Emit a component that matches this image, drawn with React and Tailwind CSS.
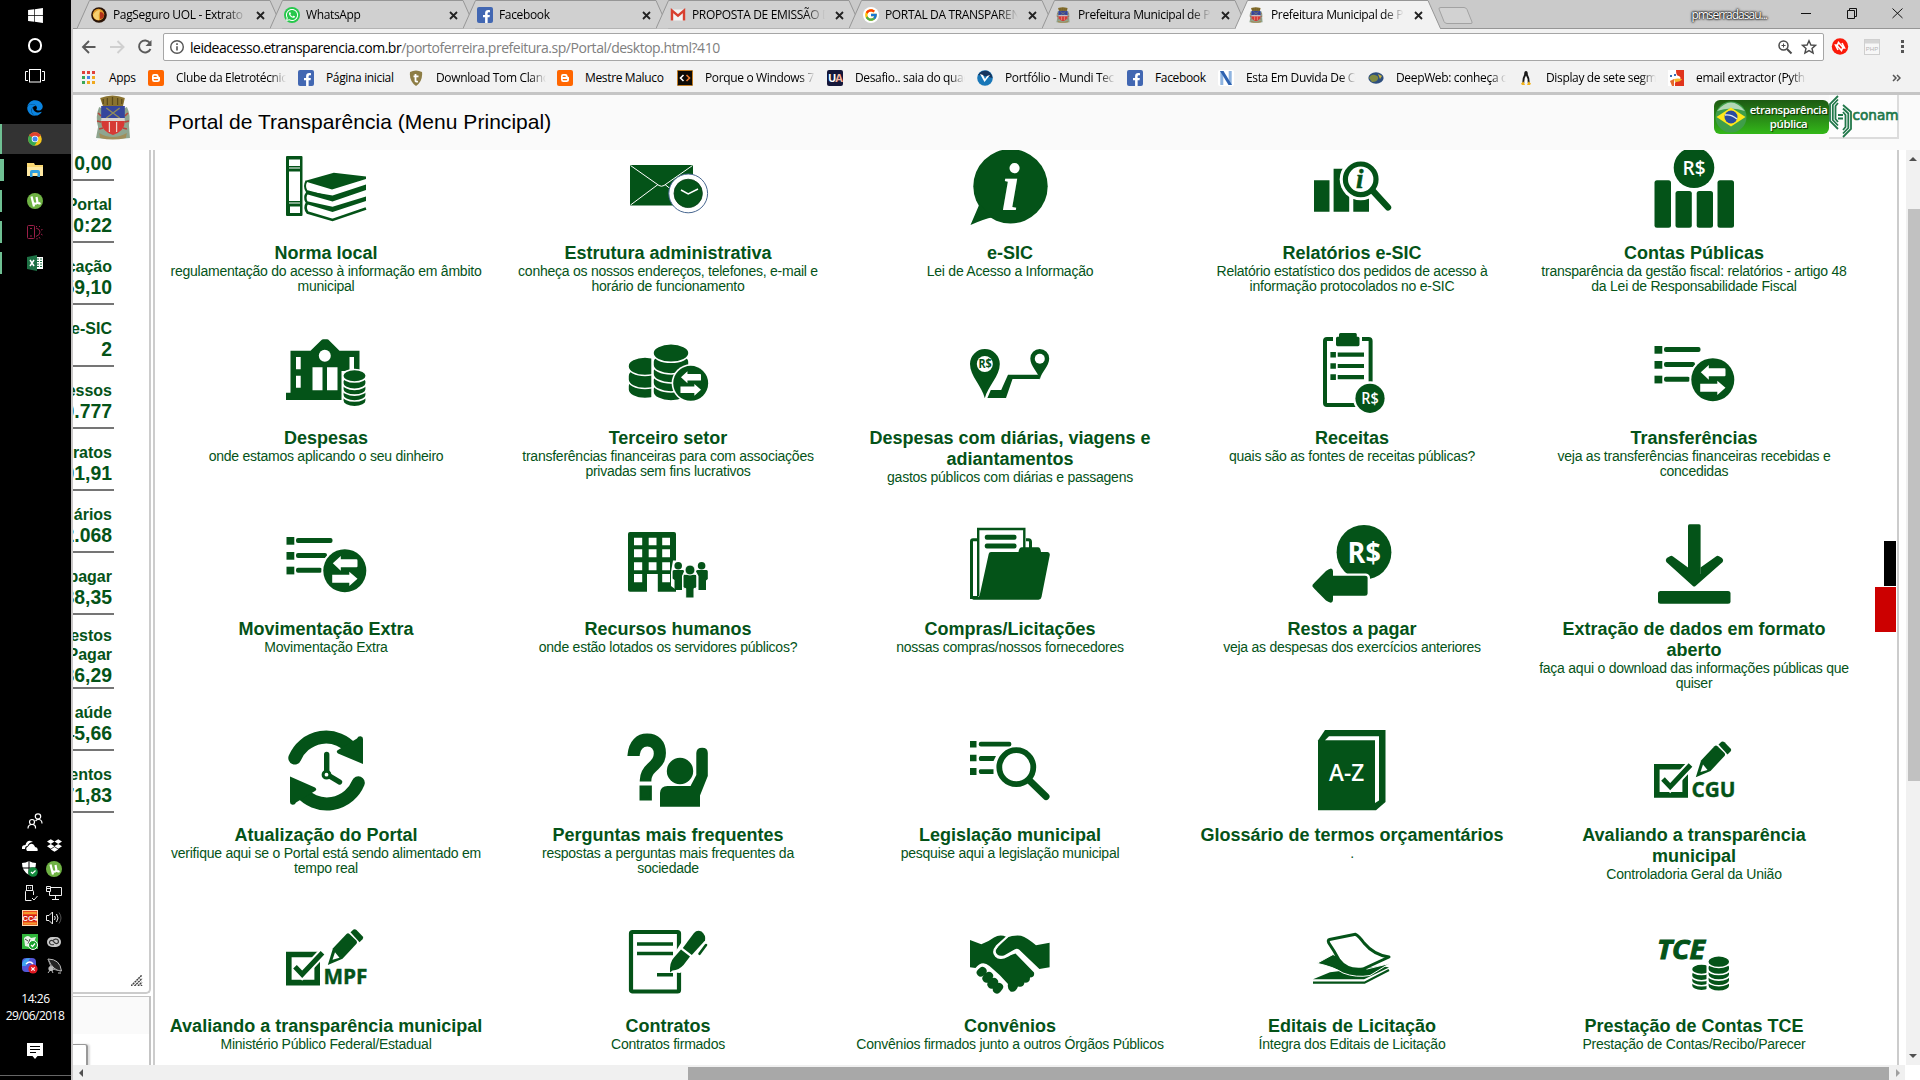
import React from "react";
import { FaWhatsapp, FaWindows, FaEdge, FaDropbox, FaFacebookF } from "react-icons/fa";
import { FcGoogle } from "react-icons/fc";

const G = "#045318";

/* ---------- shared pictogram parts ---------- */

function Coins({ x, y, w, ry, n, step }) {
  const rx = w / 2;
  const discs = [];
  for (let i = n - 1; i >= 0; i--) {
    const yy = y + ry + i * step;
    discs.push(
      <path
        key={i}
        d={`M${x} ${yy}a${rx} ${ry} 0 0 1 ${w} 0v${i === 0 ? 0.5 : step * 0.35}a${rx} ${ry} 0 0 1 ${-w} 0z`}
        fill={G}
        stroke="#fff"
        strokeWidth="1.6"
      />
    );
  }
  return <g>{discs}</g>;
}

function Swap({ cx, cy, r }) {
  const s = r / 21.3;
  return (
    <g transform={`translate(${cx} ${cy}) scale(${s})`}>
      <circle r="23.5" fill="#fff" />
      <circle r="21.5" fill={G} />
      <path d="M-12 -7.4L-4 -14.7V-11.4H11.7Q12.7 -11.4 12.7 -10V-4.5Q12.7 -3.4 11.7 -3.4H-4V0Z" fill="#fff" />
      <path d="M12.7 8L4.5 1V4H-12.6V12H4.5V15.3Z" fill="#fff" />
    </g>
  );
}

function Lines() {
  return (
    <g fill={G}>
      <rect x=".5" y="13" width="7.8" height="7.7" />
      <rect x=".5" y="28" width="7.8" height="7.7" />
      <rect x=".5" y="42.7" width="7.8" height="7.7" />
      <rect x="10" y="14" width="36.5" height="5" rx="2" />
      <rect x="10" y="29" width="31" height="5" rx="2" />
      <rect x="10" y="43.7" width="26" height="5" rx="2" />
    </g>
  );
}

function Money({ x, y, size, fill = "#fff", w = 600 }) {
  return (
    <text
      transform={`translate(${x} ${y}) scale(.93 1)`}
      fontSize={size}
      fontWeight={w}
      fill={fill}
      textAnchor="middle"
      fontFamily="'Open Sans', sans-serif"
    >
      R$
    </text>
  );
}

function CheckPencil({ label, dy, size = 21 }) {
  return (
    <g transform={`translate(0 ${dy})`}>
      <path d="M2.8 33.8H31.2V61.9H2.8Z" fill="none" stroke={G} strokeWidth="5.6" />
      <path d="M9 46L16.2 53.6L36.5 32" fill="none" stroke="#fff" strokeWidth="9" />
      <path d="M9 46L16.2 53.6L36.5 32" fill="none" stroke={G} strokeWidth="5" />
      <path d="M41.8 44.2L47 27.5L60.5 13.2Q62 12 63.5 13.2L70.5 20Q71.6 21.5 70.5 23L56.5 38Z" fill={G} />
      <path d="M46.5 39L49 31.5L53.5 37Z" fill="#fff" />
      <path d="M64.5 11.5L67.5 8.8Q69 8 70.5 9.2L77 16Q77.6 17.4 76.5 18.6L73.5 21.5Z" fill={G} />
      <text x="37.5" y="63.8" fontSize={size} fontWeight="700" fill={G} stroke={G} strokeWidth=".4" textLength="44" lengthAdjust="spacingAndGlyphs" fontFamily="'Open Sans', sans-serif">
        {label}
      </text>
    </g>
  );
}

/* ---------- menu pictograms, each on an 80 x 80 canvas ---------- */

const icons = {
  books: (
    <>
      <rect x="0" y="8" width="16.5" height="60" rx="1" fill={G} />
      <path d="M3 11.5h11v6.5H3zM3 19.5h11v1H3zM3 23.5h11V53H3zM3 54.5h11v1H3zM4 58.5h10v6.5H4z" fill="#fff" />
      <path d="M47.8 24.7L80 28.5V31L46 41.5L21 34Q18.5 33.5 19.5 32.8Z" fill={G} />
      <path d="M20.5 33Q17.6 38 20.5 43L46.5 50L79.6 39.5" fill="none" stroke={G} strokeWidth="2" />
      <path d="M80 36.5V42L46.5 53.5L20 46V43L46.5 47.5Z" fill={G} />
      <path d="M21 45Q18 49 20.5 54" fill="none" stroke={G} strokeWidth="2.4" />
      <path d="M80 48.5V53L46.5 64L20 56V53L46.5 58.8Z" fill={G} />
      <path d="M21 55Q18 60 21.5 64.5L46.5 72L80 60.5" fill="none" stroke={G} strokeWidth="2.6" />
    </>
  ),
  mail: (
    <>
      <rect x="2" y="17" width="63" height="40.5" fill={G} />
      <path d="M2.5 17.5L31 37.5Q33.5 39 36 37.5L64.5 17.5M2.5 57L30 36.5M37 36.5L50 47" fill="none" stroke="#fff" strokeWidth="1" />
      <circle cx="60.2" cy="45.4" r="19.4" fill="#fff" stroke="#47668f" strokeWidth="1" />
      <circle cx="60.2" cy="45.4" r="14.2" fill={G} stroke="#0a3d18" strokeWidth=".8" />
      <path d="M53 42L60.2 45.8L70 41" fill="none" stroke="#fff" strokeWidth="1.5" />
    </>
  ),
  info: (
    <>
      <circle cx="40.5" cy="38.3" r="37.2" fill={G} />
      <path d="M.5 77L9.5 56L23 69.3Q14 71 .5 77Z" fill={G} />
      <text x="40.5" y="62" fontSize="67" fontWeight="700" fontStyle="italic" textAnchor="middle" fill="#fff" fontFamily="'Liberation Serif', serif">
        i
      </text>
    </>
  ),
  report: (
    <>
      <path d="M2 32.3H17.5V63.7H2zM21.6 20.7H37.2V63.7H21.6zM41.3 50H57V63.7H41.3z" fill={G} />
      <circle cx="48.7" cy="31.3" r="21" fill="#fff" />
      <path d="M61 43.5L76 60" stroke="#fff" strokeWidth="10" />
      <circle cx="48.7" cy="31.3" r="15.3" fill="#fff" stroke={G} strokeWidth="5.2" />
      <path d="M60.5 42.5L76 59.3" stroke={G} strokeWidth="6.4" strokeLinecap="round" />
      <text x="47.8" y="40" fontSize="27" fontWeight="700" fontStyle="italic" textAnchor="middle" fill={G} stroke={G} strokeWidth=".5" fontFamily="'Liberation Serif', serif">
        i
      </text>
    </>
  ),
  accounts: (
    <>
      <circle cx="40" cy="19.8" r="20.3" fill={G} />
      <rect x=".5" y="32.3" width="16.5" height="47.4" rx="2.5" fill={G} />
      <rect x="21.5" y="43" width="16.3" height="36.7" rx="2.5" fill={G} />
      <rect x="42.7" y="43" width="16.3" height="36.7" rx="2.5" fill={G} />
      <rect x="63.5" y="32.3" width="16.5" height="47.4" rx="2.5" fill={G} />
      <Money x={40} y={27.2} size={20.5} />
    </>
  ),
  house: (
    <>
      <path d="M4.5 17.7H24.5L35 7.5Q36 6.3 37.5 6.3H41Q42.2 6.3 43.2 7.5L53.5 17.7H73.5V60H57V67H0V59.7H4.5Z" fill={G} />
      <circle cx="38.8" cy="22.7" r="6" fill="#fff" />
      <path d="M10 24h4.7v12.3H10zM10 42.7h4.7v12H10zM26.5 34.3h10v23h-10zM41 34.3h10.5v23H41zM63.5 24H68v13h-4.5z" fill="#fff" />
      <rect x="55.5" y="38" width="26" height="35" fill="#fff" />
      <Coins x={56.8} y={36.5} w={23.4} ry={6} n={5} step={5.8} />
    </>
  ),
  coinsSwap: (
    <>
      <Coins x={0} y={24} w={34} ry={9} n={3} step={10} />
      <rect x="23.3" y="10" width="40" height="56" fill="#fff" />
      <Coins x={25} y={10.8} w={36} ry={9} n={5} step={9} />
      <Swap cx={62.7} cy={50.3} r={17.3} />
    </>
  ),
  route: (
    <>
      <path d="M14.8 65.3C12 53 0 43 0 31A14.9 14.9 0 0 1 29.8 31C29.8 43 18 53 14.8 65.3Z" fill={G} />
      <circle cx="14.8" cy="31" r="8" fill="#fff" />
      <Money x={15} y={35.3} size={11.5} fill={G} w={700} />
      <path d="M17.4 65L20.8 57H31.2L38 41.7H68.5L69.8 46H42.5L36 65Z" fill={G} />
      <path d="M69.8 46.5C68 39 60.3 33 60.3 25.5A9.4 9.4 0 0 1 79.2 25.5C79.2 33 71.5 39 69.8 46.5Z" fill={G} />
      <circle cx="69.8" cy="25.7" r="5" fill="#fff" />
    </>
  ),
  clipboard: (
    <>
      <rect x="13" y="6" width="45.6" height="66" rx="2" fill="none" stroke={G} strokeWidth="4" />
      <rect x="21" y="1" width="29" height="13.5" fill="#fff" />
      <path d="M27 1.5Q27 0 28.5 0H43.5Q44.8 0 44.8 1.5V3.7H46Q47.5 3.7 47.5 5.2V11.5Q47.5 13.2 46 13.2H25.5Q24 13.2 24 11.5V5.2Q24 3.7 25.5 3.7H27Z" fill={G} />
      <path d="M18.4 18.9h5.5v5.6h-5.5zM18.4 30.2h5.5v5.6h-5.5zM18.4 41.3h5.5v5.6h-5.5zM25.7 19.6h26.3v4.2h-26.3zM25.7 30.9h26.3v4.2h-26.3zM25.7 42h26.3v4.2h-26.3z" fill={G} />
      <circle cx="58" cy="65.3" r="17" fill="#fff" />
      <circle cx="58" cy="65.3" r="14.6" fill={G} />
      <Money x={58} y={70.8} size={15.5} />
    </>
  ),
  listSwap: (
    <>
      <Lines />
      <Swap cx={58.8} cy={46.7} r={21.3} />
    </>
  ),
  people: (
    <>
      <path d="M2 8H46Q48 8 48 10V67.7H29.8V50H19V67.7H2Q0 67.7 0 65.7V10Q0 8 2 8Z" fill={G} />
      <path d="M6 13.7h8.2v7.6H6zM20.7 13.7h7.8v7.6h-7.8zM34.2 13.7H42v7.6h-7.8zM6 25.3h8.2v8H6zM20.7 25.3h7.8v8h-7.8zM34.2 25.3H42v8h-7.8zM6 38.3h8.2v8H6zM20.7 38.3h7.8v8h-7.8zM34.2 38.3H42v8h-7.8zM6 50h8.2v8.3H6zM34.2 50H42v8.3h-7.8z" fill="#fff" />
      <path d="M45 36.5h12v30h-8L43 62V48z" fill="#fff" />
      <circle cx="50.2" cy="41.7" r="3.8" fill={G} />
      <circle cx="73.6" cy="41.7" r="3.8" fill={G} />
      <path d="M44.6 47.5Q44.6 46 46 46H55Q56 46 56 47.5L54 52V66H46.5V56L44.6 54.5zM68 47.5Q68 46 69.5 46H78.5Q79.8 46 79.8 47.5V55L78 56.5V66H70.5V52z" fill={G} />
      <path d="M55 52Q55 50.3 56.7 50.3H67Q68.8 50.3 68.8 52V63Q68.8 64.5 66 64.5V74H57.7V64.5Q55 64.5 55 63Z" fill={G} stroke="#fff" strokeWidth="1" />
      <circle cx="62" cy="46" r="5" fill={G} stroke="#fff" strokeWidth="1" />
    </>
  ),
  folder: (
    <>
      <path d="M7 15.7H3Q1.5 15.7 1.5 17.5V73.5H8M56 15.7H58.5Q60.5 15.7 60.5 18V26" fill="none" stroke={G} strokeWidth="3" />
      <path d="M8.2 72V5H54.3V28" fill="none" stroke={G} strokeWidth="2.4" />
      <rect x="14.8" y="10.8" width="31.7" height="5" rx="2" fill={G} />
      <rect x="14.8" y="19.5" width="31.7" height="5" rx="2" fill={G} />
      <path d="M18.7 30Q19 28 21 28H48.5Q49 23.5 52 23.3H68Q70.5 23.5 71 28H77.5Q80 28.2 79.8 31L71.5 73Q71 75.7 68.5 75.7H2L9.5 72Z" fill={G} />
    </>
  ),
  payBack: (
    <>
      <circle cx="52" cy="28.3" r="27.4" fill={G} />
      <path d="M17 43.5Q22 42 22.5 49.5H54Q58 50 58 54V72Q58 74 55 74H17z" fill="#fff" />
      <path d="M.5 61Q1 60 14 47Q20.5 42 21 47V51.7H53Q55.6 51.7 55.6 54V69.5Q55.6 71.7 53 71.7H21V76Q20.5 81 14 76.5Q1 63.5 .5 62.5Z" fill={G} />
      <Money x={52.2} y={38.7} size={29} w={700} />
    </>
  ),
  download: (
    <>
      <rect x="34" y=".3" width="12.6" height="56" rx="1.5" fill={G} />
      <path d="M12.3 38Q11 36 12.8 34L16 32.3Q17.5 31.3 19 32.6L34 43.5V50H46.5V43.5L62 32.6Q63.5 31.3 65 32.3L68 34Q70 36 68.7 38L41.5 62Q40.2 63.2 38.9 62Z" fill={G} />
      <rect x="4" y="67" width="72.5" height="12.8" rx="2.5" fill={G} />
    </>
  ),
  refresh: (
    <>
      <path d="M8.8 28A34 34 0 0 1 66 19" fill="none" stroke={G} strokeWidth="13" strokeLinecap="round" />
      <path d="M71 8.5Q72 6 74.5 6.2Q77 6.5 77 9V34L52 23.5Q49.5 21.5 52 20Z" fill={G} />
      <path d="M72.3 52.8A34 34 0 0 1 15 62" fill="none" stroke={G} strokeWidth="13" strokeLinecap="round" />
      <path d="M10 72.5Q9 75 6.5 74.7Q4 74.5 4 72V46.5L29 57.5Q31.500 59.500 29 61Z" fill={G} />
      <path d="M40.7 24.5V42M43.5 46L53.5 52" stroke={G} strokeWidth="5.4" strokeLinecap="round" />
      <circle cx="40.5" cy="44.7" r="3.4" fill="#fff" stroke={G} strokeWidth="3" />
    </>
  ),
  question: (
    <>
      <text transform="translate(-2.4 69) scale(.78 1)" x="0" y="0" fontSize="91" fontWeight="700" fill={G} stroke={G} strokeWidth="3" fontFamily="'Liberation Sans', sans-serif">
        ?
      </text>
      <circle cx="52" cy="41" r="15" fill="#fff" />
      <circle cx="52" cy="41" r="13.2" fill={G} />
      <path d="M32 76.8V63Q32.5 56 39.5 56H62.5L68.3 45V23Q68.5 17.8 74.2 17.8Q79.8 17.8 79.8 23V46L72 65.5V76.8Z" fill={G} />
    </>
  ),
  search: (
    <>
      <path d="M0 11h6.5v6.5H0zM0 24.7h6.5v6.5H0zM0 38h6.5v7H0z" fill={G} />
      <rect x="8.8" y="11.8" width="32.5" height="4.8" rx="2" fill={G} />
      <path d="M10.5 26H26L23.5 31H10.5Q8.8 31 8.8 28.5T10.5 26zM10.5 39.3H23.5V44H10.5Q8.8 44 8.8 41.6T10.5 39.3z" fill={G} />
      <circle cx="46.3" cy="37.2" r="17" fill="#fff" stroke={G} strokeWidth="5.8" />
      <path d="M59.5 50.5L76 66.5" stroke={G} strokeWidth="7" strokeLinecap="round" />
    </>
  ),
  glossary: (
    <>
      <path d="M6 10.5L13 0H73.5V72L64 80.2H6Z" fill={G} />
      <path d="M13 10.3L17 6.2H67V70.5L63 73V10.3Z" fill="#fff" />
      <text x="34.6" y="51" fontSize="22.5" fontWeight="600" fill="#fff" textAnchor="middle" fontFamily="'Open Sans', sans-serif">
        A-Z
      </text>
    </>
  ),
  cgu: <CheckPencil label="CGU" dy={3} size={22} />,
  mpf: <CheckPencil label="MPF" dy={-0.3} />,
  contract: (
    <>
      <rect x="3" y="11" width="48" height="59.5" rx="1.5" fill="none" stroke={G} strokeWidth="4.2" />
      <path d="M9 23H45M9 32.5H45M29 53.7H45" stroke={G} strokeWidth="3.6" />
      <path d="M41 51L46 33L60 11H80V36L52 52Z" fill="#fff" />
      <path d="M42 51.5Q41.5 41 46 36.5L53 28.5L62 35.5L55.5 44Q51 49 44.5 49.5Z" fill={G} />
      <path d="M54.8 27L66 12Q69 8.5 73.5 10.5Q78 14 77 19.5L63.8 34Z" fill={G} />
      <path d="M78 24L71.5 32.8" stroke={G} strokeWidth="2.6" strokeLinecap="round" />
    </>
  ),
  hands: (
    <>
      <path d="M0 19L11.3 23.3Q18 21 24 16.5Q30 13 36.5 16L27 26Q22.5 32 26 35.5Q31 39.5 38 35L45.5 32.5L64 51.5Q65 56 60 56.5Q60 62.5 54.5 61.5Q53.5 67 48 65.5Q45.5 72 40.5 70.5Q37 68 38 63Q30 53.5 19.5 45Q12 38.5 5.5 47L0 46.3Z" fill={G} />
      <path d="M25.5 30Q26 27 37 16.5Q43 14 51 14.7Q57 16.5 66 24.3L79.6 21.7V46.3L69.4 48L49 28.5Q47 27 44.5 28.5L34 34.5Q26.5 36 25.5 30Z" fill={G} />
      <g stroke={G} strokeWidth="8.2" strokeLinecap="round">
        <path d="M10.8 51.5L12.5 50M16.5 57.5L19 55M21.5 63.5L24 61M27 68.5L29 66" />
      </g>
      <path d="M37.5 15.5L27 25Q22 31 26 35Q30 39 38 34.5Q46 29 48.5 30.5L67 48.5" fill="none" stroke="#fff" strokeWidth="2.2" />
    </>
  ),
  papers: (
    <>
      <path d="M18 51.3L1 58.3H52L77 46.5L70 45Z" fill={G} />
      <path d="M1 61.7H52.5L77 49" fill="none" stroke={G} strokeWidth="2.2" />
      <path d="M21 33.5L5 42.3Q22 46 31 52Q44 57 58 54.5L77.5 42.5L55 48Z" fill={G} stroke="#fff" strokeWidth="1" />
      <path d="M17.5 18.5Q15.5 19 16.8 22Q23 31 27 39Q35 50 51 48L77 36Q62 34 52 22Q47 15 43.5 13.3Z" fill="#fff" stroke={G} strokeWidth="3" strokeLinejoin="round" />
    </>
  ),
  tce: (
    <>
      <text x="3" y="38" fontSize="27" fontWeight="700" fontStyle="italic" fill={G} stroke={G} strokeWidth="1" textLength="48" lengthAdjust="spacingAndGlyphs" fontFamily="'Open Sans', sans-serif">
        TCE
      </text>
      <Coins x={37.5} y={43} w={20} ry={5} n={4} step={5} />
      <rect x="52.5" y="36" width="25" height="33" fill="#fff" />
      <Coins x={53.8} y={34.8} w={22} ry={5.6} n={5} step={5.6} />
    </>
  ),
};

const rows = [
  [
    ["books", "Norma local", "regulamentação do acesso à informação em âmbito\nmunicipal"],
    ["mail", "Estrutura administrativa", "conheça os nossos endereços, telefones, e-mail e\nhorário de funcionamento"],
    ["info", "e-SIC", "Lei de Acesso a Informação"],
    ["report", "Relatórios e-SIC", "Relatório estatístico dos pedidos de acesso à\ninformação protocolados no e-SIC"],
    ["accounts", "Contas Públicas", "transparência da gestão fiscal: relatórios - artigo 48\nda Lei de Responsabilidade Fiscal"],
  ],
  [
    ["house", "Despesas", "onde estamos aplicando o seu dinheiro"],
    ["coinsSwap", "Terceiro setor", "transferências financeiras para com associações\nprivadas sem fins lucrativos"],
    ["route", "Despesas com diárias, viagens e\nadiantamentos", "gastos públicos com diárias e passagens"],
    ["clipboard", "Receitas", "quais são as fontes de receitas públicas?"],
    ["listSwap", "Transferências", "veja as transferências financeiras recebidas e\nconcedidas"],
  ],
  [
    ["listSwap", "Movimentação Extra", "Movimentação Extra"],
    ["people", "Recursos humanos", "onde estão lotados os servidores públicos?"],
    ["folder", "Compras/Licitações", "nossas compras/nossos fornecedores"],
    ["payBack", "Restos a pagar", "veja as despesas dos exercícios anteriores"],
    ["download", "Extração de dados em formato\naberto", "faça aqui o download das informações públicas que\nquiser"],
  ],
  [
    ["refresh", "Atualização do Portal", "verifique aqui se o Portal está sendo alimentado em\ntempo real"],
    ["question", "Perguntas mais frequentes", "respostas a perguntas mais frequentes da\nsociedade"],
    ["search", "Legislação municipal", "pesquise aqui a legislação municipal"],
    ["glossary", "Glossário de termos orçamentários", "."],
    ["cgu", "Avaliando a transparência\nmunicipal", "Controladoria Geral da União"],
  ],
  [
    ["mpf", "Avaliando a transparência municipal", "Ministério Público Federal/Estadual"],
    ["contract", "Contratos", "Contratos firmados"],
    ["hands", "Convênios", "Convênios firmados junto a outros Órgãos Públicos"],
    ["papers", "Editais de Licitação", "Íntegra dos Editais de Licitação"],
    ["tce", "Prestação de Contas TCE", "Prestação de Contas/Recibo/Parecer"],
  ],
];

function Card({ icon, title, text }) {
  return (
    <div className="flex flex-col items-center whitespace-pre text-center text-[#045318]">
      <svg width="80" height="80" viewBox="0 0 80 80" className="block shrink-0 overflow-visible">
        {icons[icon]}
      </svg>
      <h2 className="mt-[15px] text-[18px] font-bold leading-[21px]">{title}</h2>
      <p className="text-[14px] leading-[15px] tracking-[-0.24px]">{text}</p>
    </div>
  );
}

/* ---------- small logos ---------- */

function Crest({ w, h }) {
  return (
    <svg width={w} height={h} viewBox="0 0 35 45" preserveAspectRatio="none" className="block">
      <path d="M4 12Q0 22 3 32L1 43L12 44H23L34 43L33 30Q35 20 31 12L27 14V30H8V14Z" fill="#8fa58f" />
      <path d="M3 18l3 3M2 26l4 1M4 34l4-1M32 18l-3 3M33 26l-4 1M31 34l-4-1" stroke="#b5443a" strokeWidth="1.6" />
      <path d="M5 3Q17 -2 29 3L27 12H8Z" fill="#8a7330" />
      <path d="M8 4v5M12 3v7M17 2v8M22 3v7M26 4v5" stroke="#5b4a1c" strokeWidth="1.2" />
      <path d="M6 11H29V25H6Z" fill="#35459c" />
      <path d="M11 13l13 10M24 13L11 23" stroke="#8f8a5c" strokeWidth="1.4" />
      <path d="M6 23H29V26H6Z" fill="#d8d4cf" />
      <path d="M6 26H29Q29 36 17.5 40Q6 36 6 26Z" fill="#d63a35" />
      <path d="M14 27v10M21 27v10" stroke="#f0d0cc" strokeWidth="1.2" />
      <path d="M4 38Q17 46 31 38L30 43Q17 46 5 43Z" fill="#a08e5a" />
    </svg>
  );
}

const Box = ({ bg, children, round }) => (
  <span className={"flex h-4 w-4 shrink-0 items-center justify-center overflow-hidden " + (round ? "rounded-full" : "rounded-[2px]")} style={{ background: bg }}>
    {children}
  </span>
);

const Fb = () => (
  <Box bg="#4267b2">
    <FaFacebookF className="ml-[3px] mt-[3px] text-[13px] text-white" />
  </Box>
);
const Blog = () => (
  <Box bg="#ff6600">
    <svg width="10" height="10" viewBox="0 0 10 10">
      <path d="M3 1H5.5Q7.6 1 7.6 3.3Q7.8 4 9 4.2V6.5Q9 9 6.5 9H3.3Q1 9 1 6.5V3.2Q1 1 3 1Z" fill="#fff" />
      <path d="M3.2 3.4H5.2M3.2 6.6H6.6" stroke="#ff6600" strokeWidth="1.2" strokeLinecap="round" />
    </svg>
  </Box>
);

const favs = {
  pag: (
    <svg width="16" height="16" viewBox="0 0 16 16">
      <circle cx="8" cy="8" r="7.8" fill="#2a1408" />
      <circle cx="7.5" cy="7.6" r="5.8" fill="#e09a2a" />
      <path d="M2 8Q5 3 9 3Q7 8 8 13Q3 13 2 8Z" fill="#f6d070" />
      <path d="M9 5Q13 5 13 9Q12 12 9 12Z" fill="#b3331a" />
    </svg>
  ),
  wa: (
    <Box bg="#27c84c" round>
      <FaWhatsapp className="text-[14px] text-white" />
    </Box>
  ),
  fb: <Fb />,
  gmail: (
    <svg width="16" height="16" viewBox="0 0 16 16">
      <rect x="1" y="2.5" width="14" height="11" fill="#f2f2f2" />
      <path d="M2 13.5V3.6L8 8.6L14 3.6V13.5" fill="none" stroke="#d8402f" strokeWidth="2.4" />
    </svg>
  ),
  google: (
    <Box bg="#fff" round>
      <FcGoogle className="text-[14px]" />
    </Box>
  ),
  crest: <Crest w={14} h={16} />,
};

const tabs = [
  ["pag", "PagSeguro UOL - Extrato de"],
  ["wa", "WhatsApp"],
  ["fb", "Facebook"],
  ["gmail", "PROPOSTA DE EMISSÃO DE"],
  ["google", "PORTAL DA TRANSPARENCIA"],
  ["crest", "Prefeitura Municipal de Porto"],
  ["crest", "Prefeitura Municipal de Porto"],
];

function Tab({ icon, label, active }) {
  return (
    <div className="relative mr-[-13px] h-[29px] w-[206px] shrink-0">
      <svg width="206" height="29" className="absolute inset-0">
        <path d="M0 28.5L12.5 .5H193L205.5 28.5" fill={active ? "#f2f2f2" : "#d0d0d0"} stroke="#969696" />
        {active && <path d="M1 28.5H205" stroke="#f2f2f2" />}
      </svg>
      <div className="relative flex h-[29px] items-center pl-[14px]">
        {favs[icon]}
        <span
          className={
            "w-[133px] overflow-hidden whitespace-nowrap text-[12px] tracking-[-0.35px] text-black [mask-image:linear-gradient(to_right,black_85%,transparent)] " +
            (icon === "crest" ? "ml-[8px]" : "ml-[6px]")
          }
        >
          {label}
        </span>
        <svg width="9" height="9" viewBox="0 0 9 9" className="absolute left-[178.5px] top-[11px]">
          <path d="M1 1L8 8M8 1L1 8" stroke="#222" strokeWidth="1.8" />
        </svg>
      </div>
    </div>
  );
}

const bookmarks = [
  [150, <Blog />, "Clube da Eletrotécnica"],
  [110, <Fb />, "Página inicial"],
  [149, (
    <svg width="16" height="16" viewBox="0 0 16 16">
      <path d="M2 2Q8 -1 14 2Q15 11 8 16Q1 11 2 2Z" fill="#8d7d45" />
      <path d="M7.5 4V11Q8 12 10 11.5M5.5 6.3H10.5" fill="none" stroke="#fff" strokeWidth="1.8" />
    </svg>
  ), "Download Tom Clancy"],
  [120, <Blog />, "Mestre Maluco"],
  [150, (
    <Box bg="#0d0a06">
      <svg width="16" height="16" viewBox="0 0 16 16"><rect x=".5" y=".5" width="15" height="15" fill="none" stroke="#c67f22" /><path d="M6.5 5L3.5 8L6.5 11" fill="none" stroke="#fff" strokeWidth="1.6" /><path d="M9.5 5L12.5 8L9.5 11" fill="none" stroke="#e8772e" strokeWidth="1.6" /></svg>
    </Box>
  ), "Porque o Windows 7"],
  [150, (
    <Box bg="#15173a">
      <span className="text-[11px] font-bold leading-none tracking-[-1px] text-white">U<span className="text-[#f3b3a0]">A</span></span>
    </Box>
  ), "Desafio.. saia do quadrado"],
  [150, (
    <svg width="16" height="16" viewBox="0 0 16 16"><circle cx="8" cy="8" r="7.8" fill="#1877b8" /><path d="M1 5Q4 0 10 .8Q15 3 15.5 8L8 6Z" fill="#17365e" /><path d="M3 4L7.5 12L13 5L10 6L8 9L6 5Z" fill="#fff" /></svg>
  ), "Portfólio - Mundi Tecno"],
  [91, <Fb />, "Facebook"],
  [150, (
    <Box bg="#fff">
      <svg width="12" height="14" viewBox="0 0 12 14"><path d="M1.8 14V0M10.2 0V14" stroke="#8fb4e0" strokeWidth="3" /><path d="M0 0H3.5L12 14H8.5Z" fill="#2e62b0" /></svg>
    </Box>
  ), "Esta Em Duvida De Como"],
  [150, (
    <svg width="16" height="16" viewBox="0 0 16 16"><ellipse cx="8" cy="8" rx="7.6" ry="5.8" fill="#2e4f7e" /><path d="M1 8Q3 4 7 5T10 9T4 12Z" fill="#7f8a42" /><path d="M10 4L14 6L12 9Z" fill="#c9b13f" /></svg>
  ), "DeepWeb: conheça o"],
  [150, (
    <svg width="16" height="16" viewBox="0 0 16 16"><path d="M8 1Q10 1 9.8 4.500Q12 8.500 11.500 13H4.500Q4 8.500 6.200 4.500Q6 1 8 1Z" fill="#1a1a1a" /><path d="M8 5.500Q10 8 9.700 13H6.300Q6 8 8 5.500Z" fill="#fff" /><path d="M3 13.500L5.500 11.500L7 15H4ZM13 13.500L10.500 11.500L9 15H12Z" fill="#f2b31b" /></svg>
  ), "Display de sete segmentos"],
  [150, (
    <svg width="16" height="16" viewBox="0 0 16 16"><rect width="16" height="16" fill="#fff" /><path d="M8 0H16V16H7Q6 11 11 10Q14 8 11 6Q8 6 8 0Z" fill="#e0341c" /><path d="M6 9Q10 8 14 9Q13 12 7 12Z" fill="#f5b72c" /><path d="M2 5h2v2H2zM6 4h2v2H6z" fill="#3a6fb5" /><path d="M2 11L6 9L6 16H4Z" fill="#e66a2b" /></svg>
  ), "email extractor (Python"],
];

function BrowserChrome() {
  return (
    <header className="h-[95px] shrink-0 border-b-[3px] border-[#c5c5c5] bg-[#f2f2f2] font-['Open_Sans',sans-serif]">
      <div className="flex h-[29px] border-b border-[#969696] bg-[#cacaca] pl-[4px]">
        {tabs.map(([icon, label], i) => (
          <Tab key={i} icon={icon} label={label} active={i === 6} />
        ))}
        <svg width="38" height="18" viewBox="0 0 38 18" className="ml-[10px] mt-[7px] shrink-0">
          <path d="M3 .5H26Q28 .5 29 2.5L34 15Q34.5 16.5 33 16.5H9Q7 16.5 6 14.5L1 2Q.5 .5 3 .5Z" fill="#d2d2d2" stroke="#a2a2a2" />
        </svg>
        <div className="ml-auto flex items-start">
          <span className="mr-[34px] mt-[6px] text-[12px] leading-[17px] tracking-[-1px] text-white [text-shadow:0_0_2px_#000,0_0_2px_#000,0_0_3px_#222]">pmserradasau...</span>
          <svg width="102" height="12" viewBox="0 0 102 12" className="mr-[17px] mt-[7px]" fill="none" stroke="#111">
            <path d="M0 6.5H10M46.5 3.5H53.5V11.5H46.5ZM48.5 3V1.5H55.5V9.5H54M91.5 1.5L101.5 11M101.5 1.5L91.5 11" />
          </svg>
        </div>
      </div>
      <div className="flex h-[36px] items-center">
        <svg width="75" height="20" viewBox="0 0 75 20" className="ml-[7px] shrink-0" fill="none" strokeWidth="1.9">
          <path d="M15.5 10H3M9 4L3 10L9 16" stroke="#5a5a5a" />
          <path d="M30 10H43M37.5 4L43.5 10L37.5 16" stroke="#d0d0d0" />
          <path d="M70 6A6 6 0 1 0 70.500 12" stroke="#5a5a5a" />
          <path d="M71.500 3V9H65.500Z" fill="#5a5a5a" />
        </svg>
        <div className="ml-[8px] flex h-[28px] w-[1661px] items-center rounded-[2px] border border-[#a6a6a6] bg-white">
          <svg width="16" height="16" viewBox="0 0 16 16" className="ml-[5px] shrink-0">
            <circle cx="8" cy="8" r="6.3" fill="none" stroke="#555" strokeWidth="1.4" />
            <path d="M8 7.2V11.5M8 4.3V6" stroke="#555" strokeWidth="1.6" />
          </svg>
          <span className="ml-[5px] whitespace-nowrap text-[14px] tracking-[-0.48px] text-[#808080]">
            <span className="text-black">leideacesso.etransparencia.com.br</span>/portoferreira.prefeitura.sp/Portal/desktop.html?410
          </span>
          <svg width="40" height="16" viewBox="0 0 40 16" className="ml-auto mr-[6px]" fill="none" stroke="#4a4a4a">
            <circle cx="6.5" cy="6.5" r="4.5" strokeWidth="1.5" />
            <path d="M10 10L14.5 14.5" strokeWidth="2" />
            <path d="M4.5 6.5H8.5M6.5 4.5V8.5" />
            <path d="M32 1.8L33.9 6L38.5 6.4L35 9.4L36.1 14L32 11.600L27.9 14L29 9.4L25.5 6.4L30.1 6Z" strokeWidth="1.4" />
          </svg>
        </div>
        <svg width="80" height="20" viewBox="0 0 80 20" className="ml-[6px]">
          <circle cx="10" cy="9.5" r="8.2" fill="#fa1a0a" />
          <path d="M8 13L5.5 8H7.5L8.5 5.5L13.5 11M12 6L14.5 11H12.5L11.5 13.5L6.5 8" fill="none" stroke="#fff" strokeWidth="1.6" />
          <rect x="34.5" y="2.5" width="15" height="15" fill="#f7f7f7" stroke="#cfcfcf" />
          <rect x="35" y="3" width="14" height="3.5" fill="#d5d5d5" />
          <text x="42" y="14" fontSize="6" fill="#b5b5b5" textAnchor="middle" fontFamily="Liberation Sans, sans-serif">PHP</text>
          <path d="M71 3h3v3h-3zM71 8h3v3h-3zM71 13h3v3h-3z" fill="#555" />
        </svg>
      </div>
      <div className="flex h-[25px] items-center whitespace-nowrap text-[12px] tracking-[-0.35px] text-black">
        <svg width="13" height="13" viewBox="0 0 13 13" className="ml-[9px] shrink-0">
          <path d="M0 0h3v3H0zM5 0h3v3H5zM10 0h3v3h-3z" fill="#e0403a" />
          <path d="M0 5h3v3H0z" fill="#3aa757" /><path d="M5 5h3v3H5z" fill="#4382e8" /><path d="M10 5h3v3h-3z" fill="#f0a91e" />
          <path d="M0 10h3v3H0z" fill="#3aa757" /><path d="M5 10h3v3H5zM10 10h3v3h-3z" fill="#f0a91e" />
        </svg>
        <span className="ml-[14px] w-[39px]">Apps</span>
        {bookmarks.map(([w, icon, label], i) => (
          <div key={i} className="flex shrink-0 items-center" style={{ width: w }}>
            {icon}
            <span
              className={
                "ml-[12px] w-[110px] overflow-hidden " +
                (label.length > 15 ? "[mask-image:linear-gradient(to_right,black_86%,transparent)]" : "")
              }
            >
              {label}
            </span>
          </div>
        ))}
        <svg width="9" height="8" viewBox="0 0 9 8" className="ml-auto mr-[19px]" fill="none" stroke="#555" strokeWidth="1.5">
          <path d="M1 1L4 4L1 7M5 1L8 4L5 7" />
        </svg>
      </div>
    </header>
  );
}

/* ---------- Windows task bar ---------- */

const UT = ({ s = 16 }) => (
  <svg width={s} height={s} viewBox="0 0 16 16">
    <circle cx="8" cy="8" r="8" fill="#6fb244" />
    <path d="M4.5 3.5L6 9.5Q8 12 10.5 9.5L9.5 4M10.5 9.5Q11.5 11 13.5 10M6 9.5L7 13.5" fill="none" stroke="#fff" strokeWidth="2.2" />
  </svg>
);

const Chrome = () => (
  <svg width="14" height="14" viewBox="0 0 14 14">
    <circle cx="7" cy="7" r="6.8" fill="#f7c71c" />
    <path d="M7 7L1.1 3.6A6.8 6.8 0 0 1 12.9 3.6Z" fill="#e0412f" />
    <path d="M7 7L1.1 3.6A6.8 6.8 0 0 0 6.5 13.8L10 8Z" fill="#37a852" />
    <circle cx="7" cy="7" r="3.3" fill="#fff" /><circle cx="7" cy="7" r="2.5" fill="#4285f4" />
  </svg>
);

const pinned = [
  [<Chrome />, "h-[30px] bg-[#333] border-l-2 pr-[3px]", 0],
  [(
    <svg width="16" height="14" viewBox="0 0 16 14"><path d="M0 0H7L8 2H16V13H0Z" fill="#fbd872" /><path d="M0 4H16V13H0Z" fill="#ffe9a3" /><path d="M3 14V9Q3 7 5 7H11Q13 7 13 9V14H10.5V10H5.5V14Z" fill="#2f9fe0" /></svg>
  ), "h-[22px] border-l-4 pr-[5px]", 5],
  [<UT />, "h-[22px] border-l-2 pr-[3px]", 9],
  [(
    <svg width="16" height="15" viewBox="0 0 16 15" fill="none" stroke="#9c1f48"><rect x=".5" y=".5" width="7" height="13" rx="1" /><path d="M3 3.500h2M3 11h2M9 3Q13 4 13 7T9 11.500M9.500 1V2M12 2L13 1M14 5L15.500 4.500M14 9L15.500 10M12 12L13 13.500M10 13V14.500" /></svg>
  ), "h-[22px] border-l-2 pr-[3px]", 9],
  [(
    <svg width="16" height="16" viewBox="0 0 16 16"><rect x="8" y="2" width="8" height="12" fill="#fff" /><path d="M10 4h2M13 4h2M10 6.5h2M13 6.5h2M10 9h2M13 9h2M10 11.5h2M13 11.5h2" stroke="#1d7044" /><path d="M0 2L10 0V16L0 14Z" fill="#1d7044" /><path d="M3 5L7 11M7 5L3 11" stroke="#fff" strokeWidth="1.5" /></svg>
  ), "h-[22px] border-l-2 pr-[3px]", 9],
];

const tray = [
  [
    <svg width="16" height="11" viewBox="0 0 16 11"><path d="M0 9Q-.5 5 3.5 5Q5 0 9 1L11 2Q7 2 5.5 6Q3 6 3 9Z" fill="#fff" /><path d="M5 11Q3 8 6 6.5Q8 2.5 11.5 4.5Q13 6 13 7Q16.5 7.5 15.5 11Z" fill="#fff" /></svg>,
    <FaDropbox className="text-[15px] text-white" />,
  ],
  [
    <svg width="16" height="16" viewBox="0 0 16 16"><path d="M7 0Q10 2 14 2Q14 10 7 14Q0 10 0 2Q4 2 7 0Z" fill="#fff" /><path d="M7 0V14M0 7H14" stroke="#000" /><circle cx="11" cy="11" r="4.8" fill="#128a3c" /><path d="M9 11L10.5 12.5L13.5 9.5" fill="none" stroke="#fff" strokeWidth="1.2" /></svg>,
    <UT />,
  ],
  [
    <svg width="16" height="16" viewBox="0 0 16 16" fill="none" stroke="#eee"><rect x="4.5" y=".5" width="6" height="5" /><path d="M6.5 2.5v1M8.5 2.5v1" /><path d="M11.5 10V6.5Q11.5 5.5 10.5 5.5H4.5Q3.5 5.5 3.5 6.5V15.5H9.5M10 13L12 15L15.5 11" /></svg>,
    <svg width="16" height="14" viewBox="0 0 16 14" fill="none" stroke="#eee"><path d="M5 1.5H15.5V9.5H3.5V6M9.5 10V13M6 13.5H13M.5 .5H4.5V5.5H.5ZM.5 2.5H4.5" /></svg>,
  ],
  [
    <svg width="16" height="16" viewBox="0 0 16 16"><rect x=".5" y=".5" width="15" height="15" fill="#e8481c" stroke="#ffd9b0" /><path d="M1.500 3h13M1.500 13.500h13" stroke="#f59a2c" strokeWidth="2" /><rect x="1" y="5" width="14" height="6.500" fill="#d01f10" /><text x="8" y="11" fontSize="7.5" fontWeight="700" fill="#fff" textAnchor="middle" fontFamily="Liberation Sans, sans-serif">CC4</text></svg>,
    <svg width="16" height="14" viewBox="0 0 16 14" fill="none" stroke="#eee"><path d="M.5 4.5H3L6.5 1V13L3 9.5H.5ZM8.5 5Q10 7 8.5 9M10.5 3Q13.5 7 10.5 11" /><path d="M13 1.5Q17 7 13 12.5" stroke="#555" /></svg>,
  ],
  [
    <svg width="16" height="16" viewBox="0 0 16 16"><rect width="16" height="15" fill="#2fb53a" /><path d="M2 4Q6 0 9 4L14 3L12 8L7 13L3 12Z" fill="#e8f3e8" /><path d="M3 5L6 7M8 5L6 10" stroke="#444" /><circle cx="11" cy="11" r="4.5" fill="#17a12a" stroke="#fff" /><path d="M9 11L10.5 12.5L13 9.5" fill="none" stroke="#fff" strokeWidth="1.2" /></svg>,
    <svg width="16" height="16" viewBox="0 0 16 16"><rect x="1" y="3" width="14" height="10" rx="5" fill="#c9c9c9" /><path d="M8 10.500Q6.500 11 5 10.500Q2.500 9 4 7Q6 5.500 8 8L9 9Q11.500 10.500 12.500 8Q12.500 5 9.500 5L7 6.200" fill="none" stroke="#333" strokeWidth="1.2" /></svg>,
  ],
  [
    <svg width="16" height="16" viewBox="0 0 16 16"><rect width="14" height="14" rx="4" fill="#5357d8" /><path d="M0 8Q0 0 8 0L4 8Z" fill="#3fa4ee" /><path d="M4 6Q8 2 11 6" fill="none" stroke="#fff" strokeWidth="1.5" /><circle cx="11" cy="11" r="4.6" fill="#e01b24" /><path d="M9.3 9.3L12.7 12.7M12.7 9.3L9.3 12.7" stroke="#fff" strokeWidth="1.2" /></svg>,
    <svg width="16" height="16" viewBox="0 0 16 16"><path d="M2 1Q14 1 15.5 13Q7 13 2 1Z" fill="#222" stroke="#bbb" /><path d="M2 1L5 9M15 13L6 11" stroke="#999" /><circle cx="5" cy="10.5" r="2.6" fill="#bbb" /><path d="M2 15L5 11L7 15M12 15H15" fill="none" stroke="#bbb" /></svg>,
  ],
];

function TaskBar() {
  return (
    <aside className="flex h-full w-[71px] shrink-0 flex-col items-center bg-black font-['Open_Sans',sans-serif] text-white">
      <div className="flex h-[30px] items-center pr-px"><FaWindows className="text-[17px]" /></div>
      <div className="flex h-[30px] items-center pr-px"><span className="h-[15px] w-[14px] rounded-full border-2 border-white" /></div>
      <div className="flex h-[31px] items-center pr-px">
        <svg width="20" height="14" viewBox="0 0 20 14" fill="none" stroke="#fff"><rect x="4.5" y=".5" width="11" height="12.5" /><path d="M3 2.5H.5V11.5H3M17 2.5H19.5V11.5H17" /></svg>
      </div>
      <div className="flex h-[33px] items-center pr-px"><FaEdge className="text-[16px] text-[#0a84e0]" /></div>
      {pinned.map(([icon, cls, gap], i) => (
        <div key={i} className={"box-border flex w-full shrink-0 items-center justify-center border-[#6fc093] " + cls} style={{ marginTop: gap }}>
          {icon}
        </div>
      ))}
      <div className="mt-[539px] flex h-[16px] items-center pr-px">
        <svg width="16" height="16" viewBox="0 0 16 16" fill="none" stroke="#fff" strokeWidth="1.2"><circle cx="5" cy="9" r="2.5" /><path d="M1 15.5Q1 11.5 5 11.5T8.5 15.5" /><circle cx="11" cy="3.5" r="2.7" /><path d="M8.5 8Q10 6.2 12 6.5Q15 7 15 10.5" /></svg>
      </div>
      <div className="mt-[4px] w-full">
        {tray.map((pair, i) => (
          <div key={i} className="flex h-[24.2px] items-center gap-[8px] pl-[22px]">
            <span className="flex w-4 justify-center">{pair[0]}</span>
            <span className="flex w-4 justify-center">{pair[1]}</span>
          </div>
        ))}
      </div>
      <div className="mt-[12px] text-[12px] leading-[17px] tracking-[-0.4px]">14:26</div>
      <div className="whitespace-nowrap pr-px text-[12px] leading-[17px] tracking-[-0.5px]">29/06/2018</div>
      <svg width="17" height="16" viewBox="0 0 17 16" className="mt-[19px] shrink-0"><path d="M0 0H16V13H10.5L8 16L5.5 13H0Z" fill="#fff" /><path d="M3 3.5H13M3 6.5H13M3 9.5H9" stroke="#000" /></svg>
      <div className="mt-[16px] h-px w-full shrink-0 bg-[#666]" />
    </aside>
  );
}

/* ---------- left summary column ---------- */

const stats = [
  [[], "0,00", 31],
  [["Portal"], "10:22", 62],
  [["cação"], "59,10", 62],
  [["e-SIC"], "2", 62],
  [["essos"], "0.777", 62],
  [["ratos"], "01,91", 62],
  [["ários"], "2.068", 62],
  [["pagar"], "38,35", 62],
  [["estos", "Pagar"], "36,29", 74],
  [["aúde"], "45,66", 62],
  [["entos"], "71,83", 62],
];

function Summary() {
  return (
    <div className="flex w-[78px] shrink-0 flex-col">
      <section className="flex h-[844px] shrink-0 flex-col rounded-br-[5px] border-b-2 border-r-2 border-[#ccc]">
        <div className="w-[41px] overflow-hidden font-bold text-[#045318]">
          {stats.map(([labels, value, h], i) => (
            <div
              key={i}
              className={"flex flex-col items-end justify-end whitespace-nowrap border-b-2 border-[#757575] pr-[2px] " + (labels.length === 2 ? "pb-px" : "pb-[5px]")}
              style={{ height: h }}
            >
              {labels.map((l) => (
                <span key={l} className="text-[16px] leading-[19px]">{l}</span>
              ))}
              <span className="text-[19.4px] leading-[22px]">{value}</span>
            </div>
          ))}
        </div>
        <svg width="12" height="11" viewBox="0 0 12 11" className="mb-[6px] ml-auto mr-[6px] mt-auto" stroke="#444" strokeWidth="1.5">
          <path d="M0 11L11 0M3.5 11L11 3.5M7 11L11 7M10 11L11 10" strokeDasharray="2 .6" />
        </svg>
      </section>
      <section className="mt-[2px] flex-1 border-r-2 border-t border-[#c4c4c4]">
        <div className="h-[37px] bg-[#fafafa]" />
        <div className="mt-[10px] h-[24px] w-[15px] rounded-tr-[3px] border-r-2 border-t border-[#999] shadow-[2px_0_2px_#ddd]" />
      </section>
    </div>
  );
}

function PortalHeader() {
  return (
    <div className="flex h-[55px] shrink-0 items-start bg-[#fafafa]">
      <div className="ml-[22px]"><Crest w={36} h={45} /></div>
      <h1 className="ml-[37px] mt-[15px] whitespace-nowrap text-[21px] leading-[24px] tracking-[0.04px] text-black">Portal de Transparência (Menu Principal)</h1>
      <div className="ml-auto mr-[21px] flex items-start">
        <div className="mt-[5px] flex h-[34px] w-[115px] items-center rounded-[6px] bg-gradient-to-b from-[#1d5a12] to-[#33b818]">
          <svg width="34" height="34" viewBox="0 0 34 34" className="shrink-0">
            <circle cx="17" cy="17" r="15.5" fill="#3f9e49" />
            <path d="M3 11Q17 -6 31 11Q17 6 3 11Z" fill="#cfe6d2" opacity=".8" />
            <path d="M2.5 17L17 7.5L31.5 17L17 26.5Z" fill="#ffe81a" />
            <circle cx="17" cy="17" r="6.5" fill="#2a4ba0" />
            <path d="M11 15Q17 14 23 19" fill="none" stroke="#e4eaf5" strokeWidth="1.4" />
          </svg>
          <div className="-mt-px flex-1 text-center font-['Open_Sans',sans-serif] text-[11.5px] font-semibold leading-[14px] tracking-[-0.45px] text-white [text-shadow:1px_1px_1px_#0a2a05]">
            <span className="block whitespace-nowrap">etransparência</span>
            <span className="block">pública</span>
          </div>
        </div>
        <div className="flex h-[44px] w-[70px] items-center border-b-2 border-r-2 border-[#dcdcdc] bg-[#fdfdfd]">
          <svg width="69" height="43" viewBox="0 0 69 43" className="overflow-visible">
            <g fill="none" stroke="#21784a" strokeWidth="1.8">
              <path d="M9 1L1 9V26L9 34M9 4.5L3.800 10V25L9 30.5M9 8L6.500 11V24L9 27" />
              <path d="M14 10L22 17V34L14 42M14 13.5L19.300 18.5V33L14 38.5M14 17L16.500 20V32L14 35" />
              <path d="M9 20H14M9 23.5H14" />
            </g>
            <text x="23.5" y="25" fontSize="14.5" fill="#21784a" stroke="#21784a" strokeWidth=".7" textLength="46" lengthAdjust="spacingAndGlyphs" fontFamily="'DejaVu Sans', sans-serif">conam</text>
          </svg>
        </div>
      </div>
    </div>
  );
}

export default function App() {
  return (
    <div className="flex h-[1080px] w-[1920px] overflow-hidden bg-white font-['Liberation_Sans',Arial,sans-serif]">
      <TaskBar />
      <div className="flex min-w-0 flex-1 flex-col border-l-2 border-[#c9c7c7]">
        <BrowserChrome />
        <PortalHeader />
        <div className="flex h-[915px] shrink-0">
          <Summary />
          <main className="relative ml-[2px] flex w-[1746px] shrink-0 overflow-hidden border-x-2 border-[#ccc]">
            <div className="mt-[-2px] grid h-[960px] w-[1710px] shrink-0 grid-cols-5 grid-rows-[185px_191px_205.5px_191.5px_187px]">
              {rows.flat().map(([icon, title, text], i) => (
                <Card key={i} icon={icon} title={title} text={text} />
              ))}
            </div>
            <div className="absolute right-px top-[391px] flex flex-col items-end gap-px">
              <div className="h-[45px] w-[12px] bg-black" />
              <div className="h-[45px] w-[21px] bg-[#cc0000]" />
            </div>
          </main>
          <div className="ml-auto flex w-[14px] flex-col items-center bg-[#f1f1f1]">
            <svg width="8" height="4" viewBox="0 0 8 4" className="mt-[7px]"><path d="M0 4L4 0L8 4Z" fill="#505050" /></svg>
            <div className="ml-[2px] mt-[48px] h-[572px] w-[12px] bg-[#c1c1c1]" />
            <svg width="8" height="4" viewBox="0 0 8 4" className="mb-[7px] mt-auto"><path d="M0 0L4 4L8 0Z" fill="#505050" /></svg>
          </div>
        </div>
        <div className="flex h-[15px] shrink-0 items-center">
          <div className="flex h-full w-[1832px] items-center bg-[#f0f0f0]">
            <svg width="4" height="8" viewBox="0 0 4 8" className="ml-[6px] mt-px"><path d="M4 0L0 4L4 8Z" fill="#505050" /></svg>
            <div className="ml-[605px] mt-[2px] h-[13px] w-[1201px] bg-[#a8a8a8]" />
            <svg width="4" height="8" viewBox="0 0 4 8" className="ml-[7px] mt-px"><path d="M0 0L4 4L0 8Z" fill="#a0a0a0" /></svg>
          </div>
        </div>
      </div>
    </div>
  );
}
